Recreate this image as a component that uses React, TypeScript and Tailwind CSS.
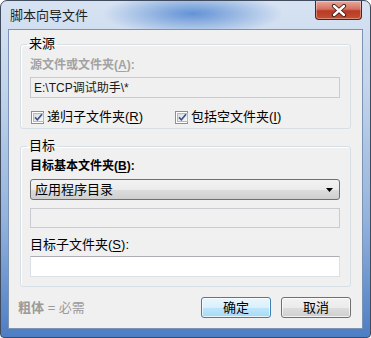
import React from 'react';

function Hot({ k }: { k: string }) {
  return (
    <span>
      (<span className="underline underline-offset-2">{k}</span>)
    </span>
  );
}

function CheckBox({ label, hotkey, className }: { label: string; hotkey: string; className?: string }) {
  return (
    <div className={`flex items-center gap-[3px] ${className ?? ''}`}>
      <span className="w-[13px] h-[13px] border border-[#8e8f8f] bg-white p-[1px] flex">
        <span className="flex-1 flex items-center justify-center border border-[#b6b9be] bg-[linear-gradient(135deg,#dcdedf,#f8f8f8)]">
          <svg width="9" height="9" viewBox="0 0 9 9">
            <path d="M1 4.3 L3.4 6.8 L8 1.2" stroke="#3c5690" strokeWidth="1.7" fill="none" />
          </svg>
        </span>
      </span>
      <span>
        {label}
        <Hot k={hotkey} />
      </span>
    </div>
  );
}

function Group({ title, children }: { title: string; children: React.ReactNode }) {
  return (
    <fieldset className="border border-[#d5dfe5] rounded-[3px] pl-[9px] pr-[10px] shadow-[inset_1px_1px_0_#fff]">
      <legend className="ml-[-3px] px-[2px] leading-[16px] text-[13px] text-black">{title}</legend>
      {children}
    </fieldset>
  );
}

export default function App() {
  return (
    <div className="w-[371px] h-[338px] rounded-t-[7px] rounded-b-[4px] border border-[#404c5e] bg-[linear-gradient(180deg,#d7e3f2_0%,#c3d5ec_25%,#93b3dd_65%,#4d7dc3_100%)] flex flex-col font-['Liberation_Sans','Noto_Sans_CJK_SC',sans-serif] text-[12px] text-black overflow-hidden">
      {/* title bar */}
      <div className="h-[28px] flex justify-between items-start bg-[radial-gradient(ellipse_90px_22px_at_52%_45%,rgba(60,120,205,0.75)_0%,rgba(60,120,205,0)_100%)]">
        <span className="self-center pl-[9px] pt-[1px] text-[13px] leading-[16px] text-[#1e1e1e]">脚本向导文件</span>
        <div className="mr-[8px] w-[47px] h-[19px] rounded-b-[4px] border border-t-0 border-[#5b1d17] bg-[linear-gradient(180deg,#e9a99a_0%,#d47260_45%,#b83a26_55%,#c4502f_100%)] flex items-center justify-center shadow-[inset_0_0_0_1px_rgba(255,255,255,0.35)]">
          <svg width="16" height="13" viewBox="0 0 16 13">
            <path d="M3 2 L13 11 M13 2 L3 11" stroke="#3a1a14" strokeWidth="4.2" strokeLinecap="round" />
            <path d="M3 2 L13 11 M13 2 L3 11" stroke="#ffffff" strokeWidth="2.4" strokeLinecap="round" />
          </svg>
        </div>
      </div>

      {/* client area */}
      <div className="mx-[7px] h-[300px] border border-[#7d93b3] bg-[#f0f0f0] px-[11px] pt-[6px] flex flex-col">
        <Group title="来源">
          <div className="pt-[5px] leading-[16px] font-bold text-[#a3a3a3]">
            源文件或文件夹<Hot k="A" />:
          </div>
          <div className="mt-[4px] h-[21px] border border-[#c9cbce] bg-[#f0f0f0] flex items-center px-[3px] text-[#1a1a1a]">
            E:\TCP调试助手\*
          </div>
          <div className="mt-[11px] h-[16px] pl-[1px] flex items-center leading-[16px] text-[13px] mb-[3px]">
            <CheckBox label="递归子文件夹" hotkey="R" className="w-[144px]" />
            <CheckBox label="包括空文件夹" hotkey="I" />
          </div>
        </Group>

        <div className="h-[9px]" />

        <Group title="目标">
          <div className="pt-[4px] leading-[16px] font-bold text-black">
            目标基本文件夹<Hot k="B" />:
          </div>
          <div className="mt-[5px] h-[21px] rounded-[3px] border border-[#707070] bg-[linear-gradient(180deg,#f3f3f3_0%,#ebebeb_50%,#dddddd_51%,#cfcfcf_100%)] flex items-center justify-between pl-[4px] pr-[6px] text-[13px]">
            <span>应用程序目录</span>
            <svg width="7" height="4" viewBox="0 0 7 4">
              <path d="M0 0 H7 L3.5 4 Z" fill="#000" />
            </svg>
          </div>
          <div className="mt-[8px] h-[20px] border border-[#c9cbce] bg-[#f0f0f0]" />
          <div className="mt-[9px] leading-[16px] text-[13px]">
            目标子文件夹<Hot k="S" />:
          </div>
          <div className="mt-[3px] h-[21px] border border-[#dcdfe5] border-t-[#abadb3] bg-white mb-[9px]" />
        </Group>

        <div className="mt-[10px] flex items-center justify-between">
          <span className="pl-[-3px] ml-[-2px] text-[13px] text-[#9a9a9a]">
            <span className="font-bold">粗体</span> = 必需
          </span>
          <div className="flex gap-[10px]">
            <button className="w-[70px] h-[21px] rounded-[3px] border border-[#3c7fb1] bg-[linear-gradient(180deg,#eaf6fd_0%,#d9f0fc_50%,#bee6fd_51%,#a7d9f5_100%)] shadow-[inset_0_0_0_1px_rgba(255,255,255,0.7)] text-[13px] leading-[16px]">
              确定
            </button>
            <button className="w-[70px] h-[21px] rounded-[3px] border border-[#707070] bg-[linear-gradient(180deg,#f2f2f2_0%,#ebebeb_50%,#dddddd_51%,#cfcfcf_100%)] shadow-[inset_0_0_0_1px_rgba(255,255,255,0.7)] text-[13px] leading-[16px]">
              取消
            </button>
          </div>
        </div>
      </div>
    </div>
  );
}
